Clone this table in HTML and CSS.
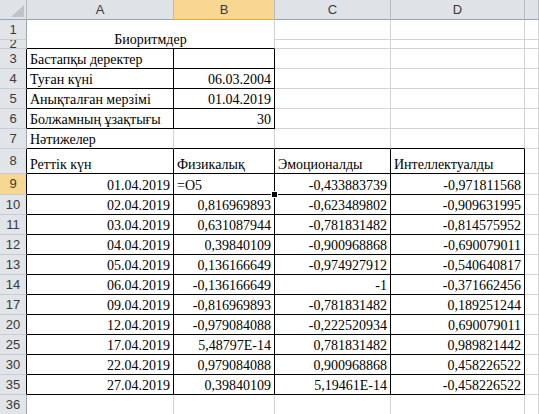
FILE: index.html
```html
<!DOCTYPE html>
<html lang="kk">
<head>
<meta charset="utf-8">
<title>Биоритмдер</title>
<link rel="stylesheet" href="styles.css">
</head>
<body>
<div class="sheet">
  <div class="corner"><svg class="tri" width="27" height="20" viewBox="0 0 27 20"><polygon points="11,17 24,17 24,5" fill="#bfc4ca"/></svg></div>
  <div class="h">A</div><div class="h sel">B</div><div class="h">C</div><div class="h">D</div><div class="h"></div>

  <div class="rh">1</div><div class="c title bb">Биоритмдер</div><div class="c"></div><div class="c"></div><div class="c"></div>
  <div class="rh">2</div><div class="c"></div><div class="c"></div><div class="c"></div>

  <div class="rh br">3</div><div class="c br bb">Бастапқы деректер</div><div class="c br bb"></div><div class="c"></div><div class="c"></div><div class="c"></div>
  <div class="rh br">4</div><div class="c br bb">Туған күні</div><div class="c br bb r">06.03.2004</div><div class="c"></div><div class="c"></div><div class="c"></div>
  <div class="rh br">5</div><div class="c br bb">Анықталған мерзімі</div><div class="c br bb r">01.04.2019</div><div class="c"></div><div class="c"></div><div class="c"></div>
  <div class="rh br">6</div><div class="c br bb">Болжамның ұзақтығы</div><div class="c br bb r">30</div><div class="c"></div><div class="c"></div><div class="c"></div>
  <div class="rh">7</div><div class="c bb">Нәтижелер</div><div class="c bb"></div><div class="c bb"></div><div class="c bb"></div><div class="c"></div>

  <div class="rh br">8</div><div class="c br bb">Реттік күн</div><div class="c br bb">Физикалық</div><div class="c br bb">Эмоционалды</div><div class="c br bb">Интеллектуалды</div><div class="c"></div>
  <div class="rh br sel">9</div><div class="c br bb r">01.04.2019</div><div class="c br bb edit">=O5<span class="handle"></span></div><div class="c br bb r">-0,433883739</div><div class="c br bb r">-0,971811568</div><div class="c"></div>
  <div class="rh br">10</div><div class="c br bb r">02.04.2019</div><div class="c br bb r">0,816969893</div><div class="c br bb r">-0,623489802</div><div class="c br bb r">-0,909631995</div><div class="c"></div>
  <div class="rh br">11</div><div class="c br bb r">03.04.2019</div><div class="c br bb r">0,631087944</div><div class="c br bb r">-0,781831482</div><div class="c br bb r">-0,814575952</div><div class="c"></div>
  <div class="rh br">12</div><div class="c br bb r">04.04.2019</div><div class="c br bb r">0,39840109</div><div class="c br bb r">-0,900968868</div><div class="c br bb r">-0,690079011</div><div class="c"></div>
  <div class="rh br">13</div><div class="c br bb r">05.04.2019</div><div class="c br bb r">0,136166649</div><div class="c br bb r">-0,974927912</div><div class="c br bb r">-0,540640817</div><div class="c"></div>
  <div class="rh br">14</div><div class="c br bb r">06.04.2019</div><div class="c br bb r">-0,136166649</div><div class="c br bb r">-1</div><div class="c br bb r">-0,371662456</div><div class="c"></div>
  <div class="rh br">17</div><div class="c br bb r">09.04.2019</div><div class="c br bb r">-0,816969893</div><div class="c br bb r">-0,781831482</div><div class="c br bb r">0,189251244</div><div class="c"></div>
  <div class="rh br">20</div><div class="c br bb r">12.04.2019</div><div class="c br bb r">-0,979084088</div><div class="c br bb r">-0,222520934</div><div class="c br bb r">0,690079011</div><div class="c"></div>
  <div class="rh br">25</div><div class="c br bb r">17.04.2019</div><div class="c br bb r">5,48797E-14</div><div class="c br bb r">0,781831482</div><div class="c br bb r">0,989821442</div><div class="c"></div>
  <div class="rh br">30</div><div class="c br bb r">22.04.2019</div><div class="c br bb r">0,979084088</div><div class="c br bb r">0,900968868</div><div class="c br bb r">0,458226522</div><div class="c"></div>
  <div class="rh br">35</div><div class="c br bb r">27.04.2019</div><div class="c br bb r">0,39840109</div><div class="c br bb r">5,19461E-14</div><div class="c br bb r">-0,458226522</div><div class="c"></div>
  <div class="rh">36</div><div class="c"></div><div class="c"></div><div class="c"></div><div class="c"></div><div class="c"></div>
</div>
</body>
</html>
```
FILE: styles.css
```css
html, body {
  margin: 0;
  padding: 0;
  background: #fff;
  overflow: hidden;
}

.sheet {
  display: grid;
  grid-template-columns: 27px 147px 101px 116px 134px 14px;
  grid-template-rows: 20px 20px 9px repeat(5, 20px) 25px 21px repeat(11, 20px);
  font-family: "Liberation Serif", "Times New Roman", serif;
  font-size: 14px;
  color: #000;
}

.c {
  box-sizing: border-box;
  border-right: 1px solid #d4d4d4;
  border-bottom: 1px solid #d4d4d4;
  display: flex;
  align-items: flex-end;
  padding: 0 3px;
  line-height: 16px;
  white-space: nowrap;
  overflow: hidden;
  min-width: 0;
}

.r {
  justify-content: flex-end;
}

.br {
  border-right-color: #000;
}

.bb {
  border-bottom-color: #000;
}

.title {
  grid-column: span 2;
  grid-row: span 2;
  justify-content: center;
  overflow: visible;
}

.corner,
.h,
.rh {
  box-sizing: border-box;
  display: flex;
  align-items: center;
  justify-content: center;
  font-family: "Liberation Sans", Arial, sans-serif;
  font-size: 13px;
  color: #3a3a3a;
  background: #dfe3e8;
  overflow: hidden;
  line-height: 16px;
}

.corner {
  position: relative;
  border-right: 1px solid #b5bbc2;
  border-bottom: 1px solid #9ea5ad;
}

.tri {
  position: absolute;
  left: 0;
  top: 0;
}

.h {
  border-right: 1px solid #b9bec5;
  border-bottom: 1px solid #9ea5ad;
  padding-top: 1px;
}

.rh {
  border-right: 1px solid #9ea5ad;
  border-bottom: 1px solid #c9cdd3;
  background: #e1e4e9;
}

.rh.br {
  border-right-color: #000;
}

.h.sel,
.rh.sel {
  background: #f8d793;
}

.h.sel {
  border-bottom-color: #e6a94a;
}

.edit {
  position: relative;
  overflow: visible;
}

.handle {
  position: absolute;
  right: -3px;
  bottom: -3px;
  width: 5px;
  height: 5px;
  box-sizing: border-box;
  background: #000;
  outline: 1px solid #fff;
  z-index: 2;
}
```
